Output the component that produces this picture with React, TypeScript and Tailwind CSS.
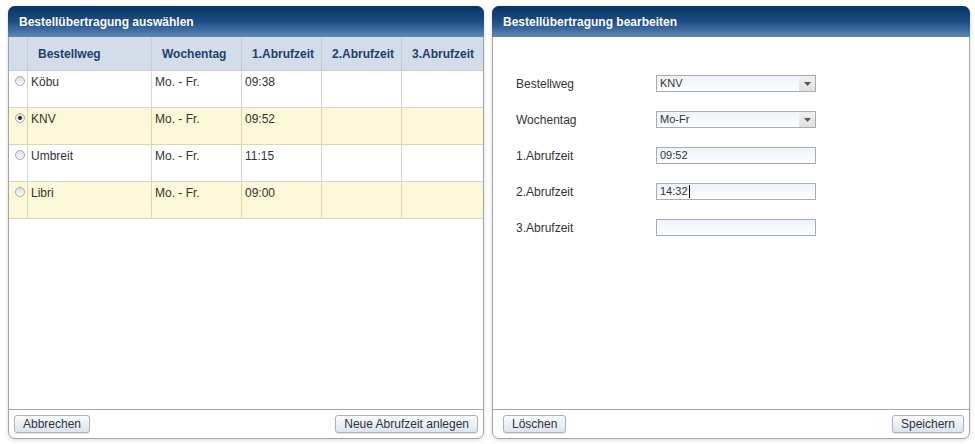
import React from "react";

const font = { fontFamily: '"Liberation Sans", Arial, sans-serif' };

function Radio({ checked }: { checked?: boolean }) {
  return (
    <span className="mt-[5px] ml-[6px] flex h-[10px] w-[10px] items-center justify-center rounded-full border border-[#a9a9a9] bg-gradient-to-b from-[#d8dde3] to-[#ffffff]">
      {checked && <span className="h-[4px] w-[4px] rounded-full bg-[#222]" />}
    </span>
  );
}

function Btn({ children }: { children: React.ReactNode }) {
  return (
    <button className="h-[18px] rounded-[3px] border border-[#a9b3c0] bg-gradient-to-b from-[#fbfcfd] to-[#dde4ec] px-[8px] text-[12px] leading-[16px] text-[#2b3240] shadow-[0_1px_1px_rgba(0,0,0,0.12)]">
      {children}
    </button>
  );
}

function Header({ title }: { title: string }) {
  return (
    <div className="flex h-[31px] shrink-0 items-center rounded-t-[7px] bg-gradient-to-b from-[#063468] via-[#1d4d84] to-[#5d88b8] pl-[11px] text-[12px] font-bold text-white">
      {title}
    </div>
  );
}

const rows = [
  { name: "Köbu", day: "Mo. - Fr.", t1: "09:38", yellow: false, checked: false },
  { name: "KNV", day: "Mo. - Fr.", t1: "09:52", yellow: true, checked: true },
  { name: "Umbreit", day: "Mo. - Fr.", t1: "11:15", yellow: false, checked: false },
  { name: "Libri", day: "Mo. - Fr.", t1: "09:00", yellow: true, checked: false },
];

function Field({ value, select, cursor }: { value: string; select?: boolean; cursor?: boolean }) {
  return (
    <div className="flex h-[17px] w-[160px] border border-[#a7adb5] bg-gradient-to-b from-[#eef3f9] to-[#ffffff]">
      <div className="flex flex-1 items-center pl-[3px] text-[11px] text-[#333]">
        {value}
        {cursor && <span className="ml-[1px] h-[13px] w-[1px] bg-black" />}
      </div>
      {select && (
        <div className="flex w-[16px] items-center justify-center bg-gradient-to-b from-[#f0f0f0] to-[#e0e0e0]">
          <svg width="7" height="4" viewBox="0 0 7 4">
            <path d="M0 0 L7 0 L3.5 4 Z" fill="#555" />
          </svg>
        </div>
      )}
    </div>
  );
}

export default function App() {
  const cols = ["w-[19px]", "w-[124px]", "w-[90px]", "w-[80px]", "w-[80px]", "w-[81px]"];
  return (
    <div className="flex h-[444px] w-[975px] gap-[8px] bg-white pl-[8px] pt-[6px]" style={font}>
      {/* Left panel */}
      <div className="flex h-[433px] w-[476px] flex-col rounded-[7px] border border-[#a4a4a4] bg-white shadow-[0_1px_4px_rgba(0,0,0,0.15)]">
        <div className="-mx-px -mt-px">
          <Header title="Bestellübertragung auswählen" />
        </div>
        <div className="flex-1">
          <div className="flex h-[34px] border-b border-[#c5cdd8] bg-[#d3dde9] text-[12px] font-bold text-[#1f416e]">
            {["", "Bestellweg", "Wochentag", "1.Abrufzeit", "2.Abrufzeit", "3.Abrufzeit"].map((h, i) => (
              <div
                key={i}
                className={`${cols[i]} flex items-center pl-[10px] ${i < 5 ? "border-r border-[#c3ccd7]" : ""}`}
              >
                {h}
              </div>
            ))}
          </div>
          {rows.map((r) => (
            <div
              key={r.name}
              className={`flex h-[37px] border-b text-[12px] text-[#333] ${
                r.yellow ? "border-[#ddd6b0] bg-[#fdf8d8]" : "border-[#d6d6d6] bg-white"
              }`}
            >
              <div className={`${cols[0]} border-r ${r.yellow ? "border-[#ddd6b0]" : "border-[#d6d6d6]"}`}>
                <Radio checked={r.checked} />
              </div>
              {[r.name, r.day, r.t1, "", ""].map((c, i) => (
                <div
                  key={i}
                  className={`${cols[i + 1]} pl-[3px] pt-[2px] ${i < 4 ? "border-r" : ""} ${
                    r.yellow ? "border-[#ddd6b0]" : "border-[#d6d6d6]"
                  }`}
                >
                  {c}
                </div>
              ))}
            </div>
          ))}
        </div>
        <div className="flex h-[29px] shrink-0 items-center justify-between border-t border-[#a4a4a4] px-[5px]">
          <Btn>Abbrechen</Btn>
          <Btn>Neue Abrufzeit anlegen</Btn>
        </div>
      </div>

      {/* Right panel */}
      <div className="flex h-[433px] w-[478px] flex-col rounded-[7px] border border-[#a4a4a4] bg-white shadow-[0_1px_4px_rgba(0,0,0,0.15)]">
        <div className="-mx-px -mt-px">
          <Header title="Bestellübertragung bearbeiten" />
        </div>
        <div className="flex flex-1 flex-col gap-[19px] pl-[23px] pt-[38px] text-[12px] text-[#333]">
          {[
            { l: "Bestellweg", v: "KNV", s: true },
            { l: "Wochentag", v: "Mo-Fr", s: true },
            { l: "1.Abrufzeit", v: "09:52" },
            { l: "2.Abrufzeit", v: "14:32", c: true },
            { l: "3.Abrufzeit", v: "" },
          ].map((f) => (
            <div key={f.l} className="flex h-[17px] items-center">
              <div className="w-[140px]">{f.l}</div>
              <Field value={f.v} select={f.s} cursor={f.c} />
            </div>
          ))}
        </div>
        <div className="flex h-[29px] shrink-0 items-center justify-between border-t border-[#a4a4a4] pl-[10px] pr-[5px]">
          <Btn>Löschen</Btn>
          <Btn>Speichern</Btn>
        </div>
      </div>
    </div>
  );
}
